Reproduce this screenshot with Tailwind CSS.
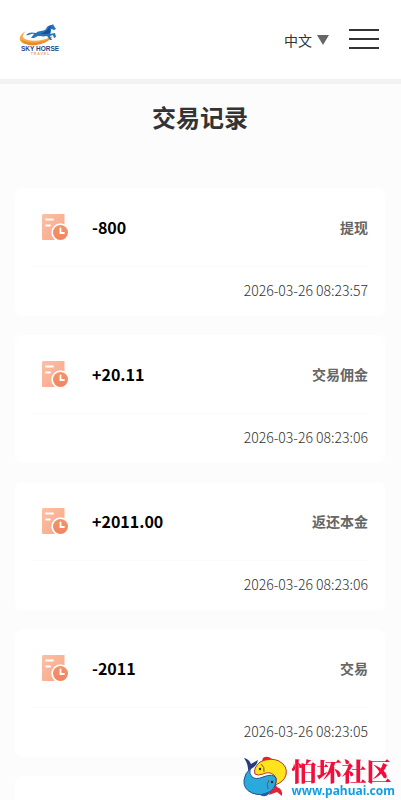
<!DOCTYPE html>
<html lang="zh-CN">
<head>
<meta charset="utf-8">
<meta name="viewport" content="width=device-width, initial-scale=1">
<title>交易记录</title>
<script src="https://cdn.jsdelivr.net/npm/@tailwindcss/browser@4"></script>
</head>
<body class="bg-[#fcfcfc] font-['Noto_Sans_CJK_SC','Noto_Sans',sans-serif] text-[#333]">
<svg class="absolute size-0" aria-hidden="true">
  <defs>
    <linearGradient id="sheet" x1="0" y1="0" x2="1" y2="1"><stop offset="0" stop-color="#fcc0a4"/><stop offset="1" stop-color="#f9a588"/></linearGradient>
    <linearGradient id="dial" x1="0" y1="0" x2="0" y2="1"><stop offset="0" stop-color="#f39468"/><stop offset="1" stop-color="#f08560"/></linearGradient>
  </defs>
  <symbol id="record" viewBox="0 0 28 28">
    <path d="M2 1H23.500V27H2Q1 27 1 25.500V2.500Q1 1 2 1Z" fill="url(#sheet)"/>
    <path d="M5 6.500H12M5 12.500H9" stroke="#fff" stroke-width="1.800" stroke-linecap="round"/>
    <circle cx="19.500" cy="19.500" r="9.200" fill="#fff"/>
    <circle cx="19.500" cy="19.500" r="7.500" fill="url(#dial)"/>
    <path d="M19.500 15.500V20H23" fill="none" stroke="#fff" stroke-width="1.800" stroke-linecap="round"/>
  </symbol>
</svg>

<header class="flex h-[84px] items-center justify-between border-b-[5px] border-[#f2f2f2] bg-white pr-[22px] pl-[19px]">
  <a href="#" aria-label="Sky Horse Travel">
    <svg class="h-8 w-[42px]" viewBox="0 0 42 32">
      <path d="M7 7C-1 11-2 19 7 20C18 22 29 19 34 12C26 16 16 18 9 16C3 15 2 12 7 7Z" fill="#f6aa48"/>
      <path d="M2 15C7 20 24 20 33 13C27 20 17 22 10 21C5 20 3 18 2 15Z" fill="#e98a2b"/>
      <path d="M7 11C10 8 13 8 17 9C20 6 24 8 27 5C28 2 30 1 33 1L34 0L35 2L37 5L35 6L32 5C32 8 32 9 31 10L36 9L37 13L35 14L34 11L31 12L33 16L31 16L28 12C24 13 21 12 19 12L15 14L12 14L15 10C12 9 10 12 7 11Z" fill="#2874ba"/>
      <path d="M20 9Q25 10 29 5Q30 2 33 1Q30 4 31 9Q26 11 20 9Z" fill="#174f96"/>
      <text x="21" y="27" text-anchor="middle" font-family="Liberation Sans, sans-serif" font-size="6.500" font-weight="700" fill="#254a83">SKY HORSE</text>
      <text x="21" y="31" text-anchor="middle" font-family="Liberation Sans, sans-serif" font-size="3.500" font-weight="700" fill="#eca16e">T R A V E L</text>
    </svg>
  </a>
  <div class="flex items-center">
    <label class="flex items-center gap-1">
      <select aria-label="语言" class="w-[29px] appearance-none bg-transparent text-sm"><option>中文</option></select>
      <svg class="h-[10px] w-3" viewBox="0 0 12 10" aria-hidden="true"><path d="M0 0H12L6 10Z" fill="#666"/></svg>
    </label>
    <button aria-label="菜单" class="mb-[2px] ml-5 flex w-[30px] flex-col gap-[7px]">
      <span class="h-[2px] w-full bg-[#333]"></span>
      <span class="h-[2px] w-full bg-[#333]"></span>
      <span class="h-[2px] w-full bg-[#333]"></span>
    </button>
  </div>
</header>

<main class="pt-4 pr-4 pl-[15px]">
  <h1 class="text-center text-2xl leading-[34px] font-bold">交易记录</h1>
  <div class="mt-[54px] flex flex-col gap-[19px]">
    <article class="rounded-lg bg-white pr-[17px] pl-4">
      <div class="flex h-[79px] items-center border-b border-[#fafafa] pl-[10px]">
        <svg class="size-7" aria-hidden="true"><use href="#record"/></svg>
        <strong class="ml-[23px] text-base font-bold text-black">-800</strong>
        <span class="ml-auto text-sm font-bold text-[#666]">提现</span>
      </div>
      <time class="flex h-[49px] items-center justify-end pb-[3px] text-sm font-light">2026-03-26 08:23:57</time>
    </article>
    <article class="rounded-lg bg-white pr-[17px] pl-4">
      <div class="flex h-[79px] items-center border-b border-[#fafafa] pl-[10px]">
        <svg class="size-7" aria-hidden="true"><use href="#record"/></svg>
        <strong class="ml-[23px] text-base font-bold text-black">+20.11</strong>
        <span class="ml-auto text-sm font-bold text-[#666]">交易佣金</span>
      </div>
      <time class="flex h-[49px] items-center justify-end pb-[3px] text-sm font-light">2026-03-26 08:23:06</time>
    </article>
    <article class="rounded-lg bg-white pr-[17px] pl-4">
      <div class="flex h-[79px] items-center border-b border-[#fafafa] pl-[10px]">
        <svg class="size-7" aria-hidden="true"><use href="#record"/></svg>
        <strong class="ml-[23px] text-base font-bold text-black">+2011.00</strong>
        <span class="ml-auto text-sm font-bold text-[#666]">返还本金</span>
      </div>
      <time class="flex h-[49px] items-center justify-end pb-[3px] text-sm font-light">2026-03-26 08:23:06</time>
    </article>
    <article class="rounded-lg bg-white pr-[17px] pl-4">
      <div class="flex h-[79px] items-center border-b border-[#fafafa] pl-[10px]">
        <svg class="size-7" aria-hidden="true"><use href="#record"/></svg>
        <strong class="ml-[23px] text-base font-bold text-black">-2011</strong>
        <span class="ml-auto text-sm font-bold text-[#666]">交易</span>
      </div>
      <time class="flex h-[49px] items-center justify-end pb-[3px] text-sm font-light">2026-03-26 08:23:05</time>
    </article>
    <article class="h-6 rounded-t-lg bg-white"></article>
  </div>
</main>

<a href="#" class="fixed right-[6px] bottom-[2px] flex items-center gap-1">
  <svg class="h-[43px] w-11" viewBox="0 0 44 43" aria-hidden="true">
    <path d="M1 3Q6 4 8 9L15 5Q14 11 8 14L5 18Q6 10 1 3Z" fill="#263a7c"/>
    <path d="M32 28L34 32Q40 34 39 41L34 37L26 40Q27 35 31 33Z" fill="#dc2735"/>
    <path d="M20 3Q24 0 29 4L27 6L19 6Z" fill="#e5202b"/>
    <path d="M12 19Q10 13 17 7Q27 2 36 6Q45 11 43 20Q41 27 32 30Q35 24 31 20Q26 16 20 19Q15 21 12 19Z" fill="#ffe31c" stroke="#b93336"/>
    <path d="M7 14Q6 19 9 22Q13 25 20 22Q30 18 33 23Q34 30 28 36Q19 42 9 38Q0 34 1 25Q2 18 7 14Z" fill="#2aa9dd" stroke="#20538f"/>
    <path d="M17 40Q22 43 26 39L28 36L19 39Z" fill="#245ca5"/>
    <path d="M18 9Q22 12 21 17M26 25Q23 29 25 34" fill="none" stroke="#8b493d"/>
    <circle cx="17" cy="14" r="1.200" fill="#222"/><circle cx="29" cy="27" r="1.200" fill="#222"/>
  </svg>
  <span class="flex flex-col items-start">
    <strong class="font-['Noto_Serif_CJK_SC','Noto_Sans_CJK_SC',serif] text-[25px] leading-[28px] font-black text-[#f20d3b]">怕坏社区</strong>
    <span class="font-['Noto_Sans','Open_Sans',sans-serif] text-xs leading-[14px] font-bold text-[#129ee5]">www.pahuai.com</span>
  </span>
</a>
</body>
</html>
